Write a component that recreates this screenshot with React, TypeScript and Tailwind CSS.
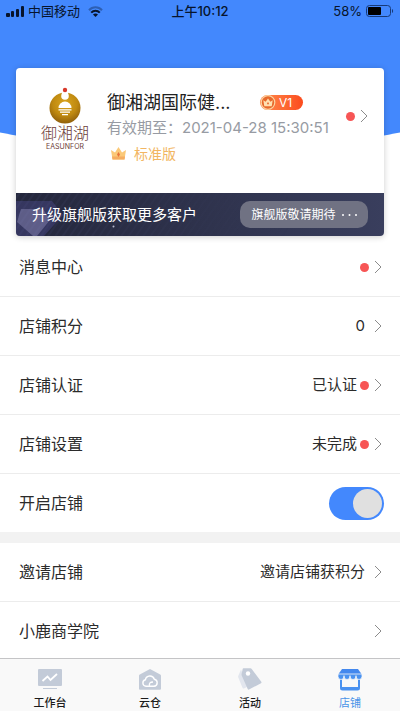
import { useState } from 'react'
import type { ReactNode } from 'react'

interface MenuItem {
  label: string
  value?: string
  dot?: boolean
}

const shopItems: MenuItem[] = [
  { label: '消息中心', dot: true },
  { label: '店铺积分', value: '0' },
  { label: '店铺认证', value: '已认证', dot: true },
  { label: '店铺设置', value: '未完成', dot: true },
]

const moreItems: MenuItem[] = [
  { label: '邀请店铺', value: '邀请店铺获积分' },
  { label: '小鹿商学院' },
]

function Chevron() {
  return (
    <svg width="8" height="14" viewBox="0 0 8 14" fill="none" stroke="#8b8b8b">
      <path d="M1 1l6 6-6 6" />
    </svg>
  )
}

function Dot() {
  return <span className="h-[9px] w-[9px] rounded-full bg-[#f75555]" />
}

function StatusBar() {
  return (
    <div className="grid h-[22px] grid-cols-3 items-center px-[6px] text-[13px] leading-5 text-[#07142c]">
      <div className="flex items-center">
        <svg width="18" height="11" viewBox="0 0 18 11" fill="currentColor">
          <rect x="0" y="7" width="4" height="4" rx="1" />
          <rect x="5" y="5" width="3" height="6" rx="1" />
          <rect x="10" y="3" width="3" height="8" rx="1" />
          <rect x="15" y="0" width="3" height="11" rx="1" />
        </svg>
        <span className="ml-1">中国移动</span>
        <svg className="ml-2" width="15" height="11" viewBox="0 0 15 11" fill="none" stroke="currentColor" strokeWidth="2">
          <path d="M1 4.2C4.6.3 10.4.3 14 4.2" opacity=".35" />
          <path d="M3.2 6.6c2.5-2.6 6.1-2.6 8.6 0" />
          <path d="M5 8.6c1.4-1.4 3.6-1.4 5 0L7.5 11z" fill="currentColor" stroke="none" />
        </svg>
      </div>
      <span className="text-center font-medium">上午10:12</span>
      <div className="flex items-center justify-end gap-1">
        <span>58%</span>
        <svg width="28" height="12" viewBox="0 0 28 12">
          <rect x=".5" y=".5" width="24" height="11" rx="3" fill="none" stroke="#173a78" />
          <rect x="2" y="2" width="13" height="8" rx="1" fill="#000" />
          <path d="M26 4c1.5.5 1.5 3.5 0 4z" fill="#173a78" />
        </svg>
      </div>
    </div>
  )
}

function ShopLogo() {
  return (
    <div className="flex w-[50px] flex-col items-center text-[#6d4038]">
      <svg width="32" height="35" viewBox="0 0 32 35" className="overflow-visible">
        <defs>
          <radialGradient id="gold" cx=".5" cy=".35" r=".65">
            <stop offset="0" stopColor="#d9a520" />
            <stop offset=".6" stopColor="#c08a10" />
            <stop offset="1" stopColor="#90600c" />
          </radialGradient>
        </defs>
        <circle cx="16" cy="20" r="15.500" fill="url(#gold)" />
        <path d="M12.500 3h7l-.5 4c-1 3-5 3-6 0z" fill="#fff" />
        <circle cx="16" cy="8" r="3.800" fill="#fff" />
        <circle cx="16" cy="2" r="2.200" fill="#d8392b" />
        <path d="M9.500 20a6.500 6.500 0 0 1 13 0z" fill="#fff" />
        <path d="M9.500 21.800h13M11 24.200h10M13 26.600h6" stroke="#fff" strokeWidth="1.200" />
      </svg>
      <span className="text-[16px] leading-5 font-light">御湘湖</span>
      <span className="text-[7px] leading-[8px]">EASUNFOR</span>
    </div>
  )
}

function VipBadge() {
  return (
    <span className="flex h-[15px] w-[43px] items-center rounded-full bg-linear-to-r from-[#ff8a4c] to-[#fb4a1c] text-[12px] leading-[15px] text-white">
      <svg width="16" height="15" viewBox="0 0 16 15">
        <circle cx="8" cy="7.500" r="6.800" fill="#e86a2c" stroke="#fbd3a0" strokeWidth="1.200" />
        <path d="M3.300 5.200l2.300 1.500L8 3.600l2.400 3.100 2.300-1.500-1 6H4.300z" fill="#ffe0b0" />
        <path d="M8 7l1 1.400-1 1.400-1-1.400z" fill="#e8632c" />
      </svg>
      <span className="ml-[3px]">V1</span>
    </span>
  )
}

function ShopCard() {
  return (
    <section className="overflow-hidden rounded bg-white shadow-[0_1px_6px_rgba(0,0,0,0.2)]">
      <a href="#shop" className="flex h-[125px] pt-5 pr-4 pl-6">
        <ShopLogo />
        <div className="ml-[17px] min-w-0 flex-1">
          <div className="flex items-center gap-6 pt-px">
            <h1 className="w-[129px] text-[18px] leading-[27px] whitespace-nowrap text-[#222]">御湘湖国际健...</h1>
            <VipBadge />
          </div>
          <p className="text-[15px] leading-6 whitespace-nowrap text-[#979ba3]">有效期至：2021-04-28 15:30:51</p>
          <p className="flex items-center gap-2 pl-1 text-[14px] leading-[27px] text-[#f2b662]">
            <svg width="15" height="13" viewBox="0 0 15 13">
              <path d="M0 3l4 2.500L7.500 0 11 5.500 15 3l-1.500 9.500h-12z" fill="#fbc978" />
              <path d="M1 9.500h13l-.5 3h-12z" fill="#f6ad60" />
              <path d="M7.500 5l1.500 2.500L7.500 10 6 7.500z" fill="#e8743a" />
            </svg>
            标准版
          </p>
        </div>
        <span className="flex h-14 items-center gap-[5px]">
          <Dot />
          <Chevron />
        </span>
      </a>
      <div className="relative flex h-[43px] items-center justify-between overflow-hidden bg-linear-to-r from-[#24273c] to-[#393e5d] px-4">
        <svg className="absolute inset-0 h-full w-full" aria-hidden="true">
          <defs>
            <pattern id="stripes" width="6" height="6" patternUnits="userSpaceOnUse" patternTransform="rotate(35)">
              <path d="M3 0v6" stroke="#50547a" strokeOpacity=".3" />
            </pattern>
            <linearGradient id="fade">
              <stop offset="0" stopColor="#fff" />
              <stop offset=".75" stopColor="#000" />
            </linearGradient>
            <mask id="stripeMask">
              <rect width="100%" height="100%" fill="url(#fade)" />
            </mask>
          </defs>
          <rect width="100%" height="100%" fill="url(#stripes)" mask="url(#stripeMask)" />
          <path d="M0 8h36l11 14-19 21H0z" fill="#5553a0" fillOpacity=".35" />
          <path d="M5 16h22l7 11-13 16h-4L1 29z" fill="#a9a7d4" fillOpacity=".35" />
          <circle cx="97.500" cy="33.500" r="1" fill="#b9bbce" />
        </svg>
        <span className="relative text-[15px] leading-6 text-white">升级旗舰版获取更多客户</span>
        <button type="button" className="relative flex h-[27px] w-32 items-center justify-center gap-[6px] rounded-[10px] bg-[#707283] text-[12px] text-white">
          旗舰版敬请期待
          <svg width="15" height="2" viewBox="0 0 15 2" fill="currentColor">
            <circle cx="1" cy="1" r="1" />
            <circle cx="7.500" cy="1" r="1" />
            <circle cx="14" cy="1" r="1" />
          </svg>
        </button>
      </div>
    </section>
  )
}

function MenuRow({ label, value, dot }: MenuItem) {
  return (
    <a href="#menu" className="flex h-[59px] items-center border-b border-[#ececec] pr-[18px] pl-[19px] text-[#2b2b2b]">
      <span className="flex-1 text-[16px]">{label}</span>
      {value && <span className={dot ? 'mr-[3px] text-[15px]' : 'mr-[9px] text-[15px]'}>{value}</span>}
      {dot && <span className="mr-[5px] flex"><Dot /></span>}
      <Chevron />
    </a>
  )
}

function Tab({ label, active, children }: { label: string; active?: boolean; children: ReactNode }) {
  return (
    <a
      href="#tab"
      className={`flex flex-1 flex-col items-center pt-2 text-[11px] leading-4 ${active ? 'text-[#4a94e8]' : 'font-medium text-[#1c1c1c]'}`}
    >
      {children}
      <span className="mt-1">{label}</span>
    </a>
  )
}

function TabBar() {
  return (
    <nav className="flex h-[53px] border-t border-[#c4c4c6] bg-[#f9f9f9]">
      <Tab label="工作台">
        <svg width="26" height="24" viewBox="0 0 26 24">
          <rect x="1" y="2" width="24" height="17" rx="1" fill="#c3cbd8" />
          <path d="M5.500 14l5-4.500 3 3.500 6.500-6" fill="none" stroke="#fff" strokeWidth="1.800" />
          <path d="M6 21.500h14" stroke="#c3cbd8" />
        </svg>
      </Tab>
      <Tab label="云仓">
        <svg width="26" height="24" viewBox="0 0 26 24">
          <path d="M13 2l10.200 5.400q.8.400.8 1.400v13q0 1-1 1H3q-1 0-1-1v-13q0-1 .8-1.400z" fill="#c3cbd8" />
          <path d="M9 19.300a3.300 3.300 0 0 1-.6-6.500 4.600 4.600 0 0 1 8.900-.6 3.600 3.600 0 0 1-.3 7.100zM12.500 18.500q-.8-3.500 3.500-3.500" fill="none" stroke="#fff" strokeWidth="1.400" />
        </svg>
      </Tab>
      <Tab label="活动">
        <svg width="26" height="24" viewBox="0 0 26 24">
          <path d="M4 2.500L1.300 8.700q-.4 1 0 1.900l4.200 10.200q.4 1 1.400.6l4-2z" fill="#e2e6ee" />
          <path d="M6.500 1.300h6.800q1 0 1.600.9l9.400 12.500q.6.900-.3 1.500l-12 6.400q-.9.400-1.300-.6L4.700 8.500q-.3-1 0-1.900l1-4.500q.1-.8.800-.8z" fill="#c3cbd8" />
          <circle cx="11" cy="6.500" r="2.200" fill="#fff" />
        </svg>
      </Tab>
      <Tab label="店铺" active>
        <svg width="26" height="24" viewBox="0 0 26 24">
          <path d="M5 2h16l3.500 5h-23z" fill="#4388ee" />
          <path d="M4 11v10q0 1.500 1.500 1.500h15q1.500 0 1.500-1.500V11" fill="none" stroke="#4a92f0" strokeWidth="2" />
          <path d="M5 20h16v2.500H5z" fill="#4a92f0" />
          <path d="M1 7h24v2.500a3 3 0 0 1-6 0 3 3 0 0 1-6 0 3 3 0 0 1-6 0 3 3 0 0 1-6 0z" fill="#4a92f0" stroke="#f9f9f9" strokeWidth=".8" />
          <path d="M7 8.500v2M13 8.500v2M19 8.500v2" stroke="#f9f9f9" />
        </svg>
      </Tab>
    </nav>
  )
}

export default function App() {
  const [open, setOpen] = useState(true)

  return (
    <div className="flex min-h-screen flex-col bg-white font-['Inter','Noto_Sans_CJK_SC',sans-serif]">
      <header className="relative px-4 pb-[2px]">
        <div className="absolute inset-x-0 top-0 h-[150px] overflow-hidden">
          <div className="h-5 bg-[#4388fd]" />
          <div className="absolute bottom-0 -left-1/2 h-[260px] w-[200%] rounded-[50%] bg-[#4388fd]" />
        </div>
        <div className="relative">
          <div className="-mx-4">
            <StatusBar />
          </div>
          <div className="pt-[46px]">
            <ShopCard />
          </div>
        </div>
      </header>
      <main className="flex-1">
        {shopItems.map(item => <MenuRow key={item.label} {...item} />)}
        <label className="flex h-[58px] items-center justify-between pr-4 pl-[19px] text-[16px] text-[#2b2b2b]">
          开启店铺
          <input
            type="checkbox"
            role="switch"
            checked={open}
            onChange={e => setOpen(e.target.checked)}
            className="flex h-[33px] w-[55px] appearance-none items-center rounded-full bg-[#c8c8c8] p-[2px] before:h-[29px] before:w-[29px] before:rounded-full before:bg-[#e0e0e0] checked:justify-end checked:bg-[#4388fd]"
          />
        </label>
        <div className="h-[11px] bg-[#f2f2f2]" />
        {moreItems.map(item => <MenuRow key={item.label} {...item} />)}
      </main>
      <div className="sticky bottom-0 -mt-[3px]">
        <TabBar />
      </div>
    </div>
  )
}
